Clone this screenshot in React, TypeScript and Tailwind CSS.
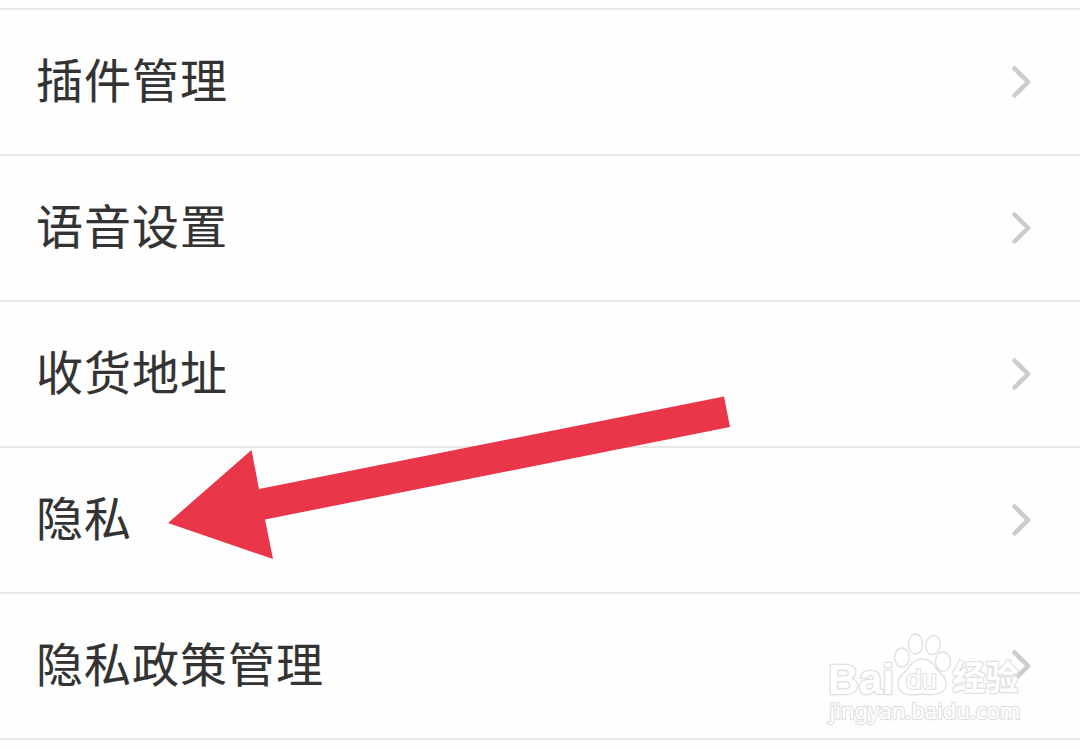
const items = ["插件管理", "语音设置", "收货地址", "隐私", "隐私政策管理"];

function Chevron() {
  return (
    <svg className="h-9 w-6" viewBox="0 0 24 36" fill="none">
      <path d="M5.5 4.5 L19.2 18 L5.5 31.5" stroke="#cccccc" strokeWidth="4.5" strokeLinecap="round" strokeLinejoin="round" />
    </svg>
  );
}

function Arrow() {
  return (
    <svg className="pointer-events-none absolute left-[160px] top-[390px]" width="580" height="180" viewBox="160 390 580 180">
      <polygon points="168,523 251.5,450 259,489 724,396.5 730,427 265,519.5 273,559" fill="#ea3649" />
    </svg>
  );
}

function Watermark() {
  const latin = '"Liberation Sans", Arial, sans-serif';
  return (
    <svg className="pointer-events-none absolute left-[820px] top-[625px]" width="220" height="124" viewBox="0 0 220 124">
      <g fill="#ffffff" fillOpacity="0.8" stroke="#e0e0e0" strokeWidth="1.4" strokeLinejoin="round">
        <text x="8" y="68.5" fontSize="43" fontWeight="700" textLength="66" lengthAdjust="spacingAndGlyphs" fontFamily={latin} strokeWidth="2.6" fillOpacity="1" paintOrder="stroke">Bai</text>
        <ellipse cx="82" cy="32.5" rx="7.3" ry="9.5" />
        <ellipse cx="95.5" cy="19" rx="7" ry="10" />
        <ellipse cx="113" cy="20" rx="7.2" ry="9.5" transform="rotate(10 113 20)" />
        <ellipse cx="123" cy="36.5" rx="7.5" ry="9.8" />
        <path d="M102 34 C109 34 113 38 116 43 C120 49 127 52 126 60 C125 68 118 71 102 69 C86 72 79 68 78 60 C77 52 84 49 88 43 C92 38 95 34 102 34 Z" />
        <text x="86" y="64" fontSize="27" textLength="31" lengthAdjust="spacingAndGlyphs" fontFamily={latin} strokeWidth="2.2" fillOpacity="1" paintOrder="stroke">du</text>
        <text x="132.5" y="65" fontSize="34" fontWeight="700" textLength="66" lengthAdjust="spacingAndGlyphs" fontFamily='"Noto Sans CJK SC", sans-serif' strokeWidth="2.4" fillOpacity="1" paintOrder="stroke">经验</text>
      </g>
      <text x="9.5" y="94" fontSize="21" textLength="191" lengthAdjust="spacingAndGlyphs" fontFamily='"Noto Sans", sans-serif' fill="#ffffff" stroke="#e2e2e2" strokeWidth="2.4" paintOrder="stroke" strokeLinejoin="round">jingyan.baidu.com</text>
    </svg>
  );
}

export default function App() {
  return (
    <main className="relative h-[749px] w-full overflow-hidden bg-[#fefefe] pt-2 font-['Noto_Sans_CJK_SC',sans-serif] text-[#333333]">
      <ul className="border-b-2 border-[#e8e8e8]">
        {items.map((item) => (
          <li key={item} className="flex h-[146px] items-center justify-between border-t-2 border-[#e8e8e8] pl-9 pr-[47px]">
            <span className="pb-[9px] text-[47px] leading-none tracking-[1px] [-webkit-text-stroke:0.15px_#333333]">{item}</span>
            <Chevron />
          </li>
        ))}
      </ul>
      <Arrow />
      <Watermark />
    </main>
  );
}
